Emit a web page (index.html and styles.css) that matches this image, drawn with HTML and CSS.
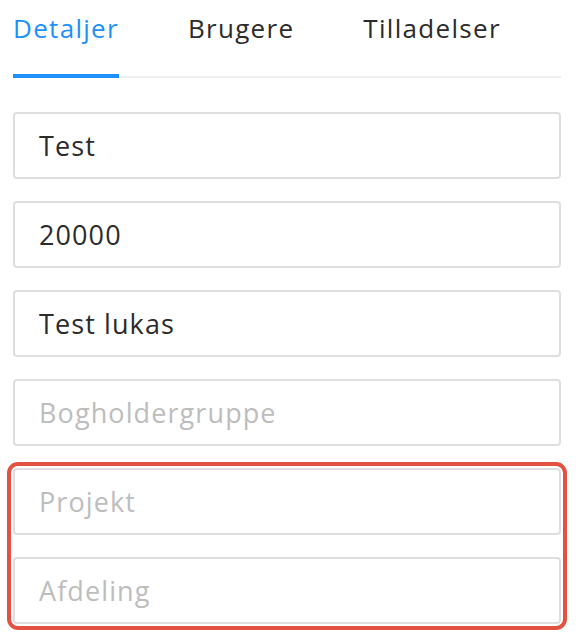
FILE: index.html
```html
<!DOCTYPE html>
<html lang="da">
<head>
<meta charset="utf-8">
<title>Detaljer</title>
<link rel="stylesheet" href="styles.css">
</head>
<body>
<div class="page">
  <nav class="tabs">
    <div class="tab active">Detaljer</div>
    <div class="tab">Brugere</div>
    <div class="tab">Tilladelser</div>
  </nav>
  <div class="fields">
    <div class="field">Test</div>
    <div class="field">20000</div>
    <div class="field">Test lukas</div>
    <div class="field placeholder">Bogholdergruppe</div>
    <div class="group">
      <div class="field placeholder">Projekt</div>
      <div class="field placeholder">Afdeling</div>
    </div>
  </div>
</div>
</body>
</html>
```
FILE: styles.css
```css
html, body {
  margin: 0;
  padding: 0;
  background: #ffffff;
}
.page {
  width: 548px;
  margin-left: 13px;
  font-family: "Open Sans", "Liberation Sans", sans-serif;
  color: #2b2b2b;
}
.tabs {
  display: flex;
  gap: 69px;
  border-bottom: 2px solid #eeeeee;
  padding-top: 12px;
}
.tab {
  font-size: 26px;
  line-height: 32px;
  letter-spacing: 1.3px;
  padding-bottom: 30px;
  margin-bottom: -2px;
  border-bottom: 4px solid transparent;
}
.tab.active {
  color: #1e90fa;
  border-bottom-color: #1e90fa;
}
.fields {
  display: flex;
  flex-direction: column;
  gap: 22px;
  margin-top: 34px;
}
.field {
  height: 67px;
  box-sizing: border-box;
  border: 2px solid #dedede;
  border-radius: 4px;
  padding-left: 24px;
  display: flex;
  align-items: center;
  font-size: 27px;
  letter-spacing: 1.1px;
}
.placeholder {
  color: #bdbdbd;
}
.group {
  display: flex;
  flex-direction: column;
  gap: 22px;
  border: 4px solid #e35241;
  border-radius: 11px;
  padding: 2px 2px;
  margin: 0 -6px;
  margin-top: -6px;
}
```
